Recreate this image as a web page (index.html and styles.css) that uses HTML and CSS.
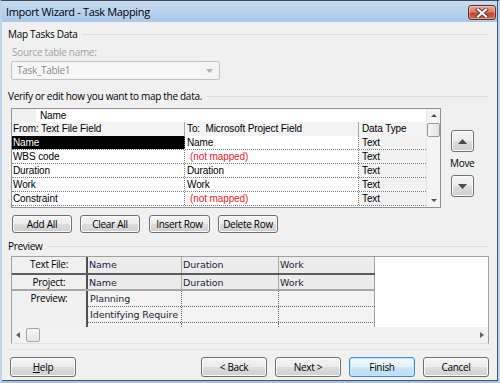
FILE: index.html
```html
<!DOCTYPE html>
<html lang="en">
<head>
  <meta charset="UTF-8" />
  <title>Import Wizard - Task Mapping</title>
  <link rel="stylesheet" href="styles.css">
</head>
<body>
  <div class="window">
    <div class="titlebar">
      <span class="title">Import Wizard - Task Mapping</span>
      <span class="close-btn">
        <svg width="14" height="10" viewBox="0 0 14 10">
          <path d="M3 1.5 L11 8.5 M11 1.5 L3 8.5" stroke="#5a3a36" stroke-width="4" stroke-linecap="square"/>
          <path d="M3 1.5 L11 8.5 M11 1.5 L3 8.5" stroke="#ffffff" stroke-width="2.2" stroke-linecap="square"/>
        </svg>
      </span>
    </div>

    <div class="content">
      <div class="group-title first"><span>Map Tasks Data</span><div class="rule"></div></div>
      <div class="field-label">Source table name:</div>
      <div class="combo">
        <span class="combo-text">Task_Table1</span>
        <span class="combo-arrow">
          <svg width="7" height="4" viewBox="0 0 7 4"><path d="M0 0 H7 L3.5 4 Z" fill="#b0b0b0"/></svg>
        </span>
      </div>

      <div class="group-title verify"><span>Verify or edit how you want to map the data.</span><div class="rule"></div></div>

      <div class="map-row">
        <div class="grid">
          <div class="grid-table">
            <div class="top-row">
              <div class="corner"></div>
              <div class="top-name">Name</div>
            </div>
            <div class="row head-row">
              <div class="cell">From: Text File Field</div>
              <div class="cell">To:&nbsp; Microsoft Project Field</div>
              <div class="cell">Data Type</div>
            </div>
            <div class="row data-row">
              <div class="cell selected">Name</div>
              <div class="cell">Name</div>
              <div class="cell type">Text</div>
            </div>
            <div class="row data-row">
              <div class="cell">WBS code</div>
              <div class="cell unmapped">(not mapped)</div>
              <div class="cell type">Text</div>
            </div>
            <div class="row data-row">
              <div class="cell">Duration</div>
              <div class="cell">Duration</div>
              <div class="cell type">Text</div>
            </div>
            <div class="row data-row">
              <div class="cell">Work</div>
              <div class="cell">Work</div>
              <div class="cell type">Text</div>
            </div>
            <div class="row data-row">
              <div class="cell">Constraint</div>
              <div class="cell unmapped">(not mapped)</div>
              <div class="cell type">Text</div>
            </div>
          </div>
          <div class="vscroll">
            <span class="arrow-up-small"></span>
            <span class="vthumb"></span>
            <span class="spacer"></span>
            <span class="arrow-down-small"></span>
          </div>
        </div>

        <div class="move">
          <button class="move-btn"><svg width="9" height="5" viewBox="0 0 9 5"><path d="M0 5 L4.5 0 L9 5 Z" fill="#4a4a4a"/></svg></button>
          <div class="move-label">Move</div>
          <button class="move-btn"><svg width="9" height="5" viewBox="0 0 9 5"><path d="M0 0 L9 0 L4.5 5 Z" fill="#4a4a4a"/></svg></button>
        </div>
      </div>

      <div class="grid-buttons">
        <button class="btn">Add All</button>
        <button class="btn">Clear All</button>
        <button class="btn wide">Insert Row</button>
        <button class="btn">Delete Row</button>
      </div>

      <div class="group-title preview-title"><span>Preview</span><div class="rule"></div></div>

      <div class="preview">
        <div class="preview-area">
          <div class="preview-grid">
            <div class="prow hdr1">
              <div class="plabel">Text File:</div>
              <div class="pcell c1">Name</div>
              <div class="pcell c2">Duration</div>
              <div class="pcell c3">Work</div>
            </div>
            <div class="prow hdr2">
              <div class="plabel">Project:</div>
              <div class="pcell c1">Name</div>
              <div class="pcell c2">Duration</div>
              <div class="pcell c3">Work</div>
            </div>
            <div class="pbody">
              <div class="plabel preview-label">Preview:</div>
              <div class="pdata">
                <div class="drow">
                  <div class="dcell c1">Planning</div>
                  <div class="dcell c2"></div>
                  <div class="dcell c3"></div>
                </div>
                <div class="drow">
                  <div class="dcell c1">Identifying Require</div>
                  <div class="dcell c2"></div>
                  <div class="dcell c3"></div>
                </div>
                <div class="drow filler">
                  <div class="dcell c1"></div>
                  <div class="dcell c2"></div>
                  <div class="dcell c3"></div>
                </div>
              </div>
            </div>
          </div>
          <div class="preview-blank"></div>
        </div>
        <div class="hscroll">
          <svg class="h-left" width="4" height="6" viewBox="0 0 4 6"><path d="M4 0 L0 3 L4 6 Z" fill="#606060"/></svg>
          <span class="hthumb"></span>
          <span class="spacer"></span>
          <svg class="h-right" width="4" height="6" viewBox="0 0 4 6"><path d="M0 0 L4 3 L0 6 Z" fill="#606060"/></svg>
        </div>
      </div>
    </div>

    <div class="separator"></div>
    <div class="footer">
      <button class="btn foot help"><u>H</u>elp</button>
      <div class="foot-right">
        <button class="btn foot">&lt; Back</button>
        <button class="btn foot">Next &gt;</button>
        <button class="btn foot default">Finish</button>
        <button class="btn foot">Cancel</button>
      </div>
    </div>
  </div>
</body>
</html>
```

FILE: styles.css
```css
* {
  box-sizing: border-box;
}

body {
  margin: 0;
  font-family: "Open Sans", sans-serif;
  font-size: 10px;
  letter-spacing: -0.3px;
  color: #000;
  background: #b9d1ea;
}

.window {
  width: 500px;
  height: 383px;
  background: #f0f0f0;
  border-top: 1px solid #3f4c5a;
  border-left: 2px solid #bcd4ec;
  border-right: 2px solid #bcd4ec;
  border-bottom: 2px solid #a6c3e3;
  box-shadow: inset -1px 0 0 #4a5561, inset 0 -1px 0 #4a5561;
  display: flex;
  flex-direction: column;
}

/* title bar */
.titlebar {
  height: 21px;
  display: flex;
  align-items: center;
  justify-content: space-between;
  padding: 0 1px 0 4px;
  background: linear-gradient(#c9dcf1, #a9c7e8);
  margin-right: 1px;
}

.title {
  font-size: 11px;
  letter-spacing: -0.35px;
  color: #000;
}

.close-btn {
  width: 28px;
  height: 15px;
  margin-top: 2px;
  border: 1px solid #6b2e26;
  border-radius: 3px;
  background: linear-gradient(#e4a899 0%, #d7806c 45%, #c2452c 55%, #cf6b4e 100%);
  display: flex;
  align-items: center;
  justify-content: center;
  box-shadow: inset 0 0 0 1px rgba(255, 255, 255, 0.35);
}

/* body */
.content {
  padding: 0 10px 0 6px;
}

.group-title {
  height: 14px;
  display: flex;
  align-items: center;
  line-height: 14px;
}

.group-title .rule {
  flex: 1;
  height: 0;
  border-top: 1px solid #d5dfe5;
  margin-left: 5px;
}

.group-title.first { margin-top: 5px; }
.group-title.verify { margin-top: 9px; }
.group-title.preview-title { margin-top: 6px; }

.field-label {
  margin-top: 4px;
  padding-left: 4px;
  height: 14px;
  line-height: 14px;
  color: #a3a3a3;
}

.combo {
  margin: 2px 0 0 3px;
  width: 209px;
  height: 19px;
  border: 1px solid #c3c3c3;
  border-radius: 2px;
  background: #f4f4f4;
  display: flex;
  padding: 1px;
}

.combo-text {
  flex: 1;
  background: #f7f7f7;
  color: #8c8c8c;
  padding-left: 4px;
  line-height: 15px;
}

.combo-arrow {
  width: 18px;
  display: flex;
  align-items: center;
  justify-content: center;
}

/* mapping grid */
.map-row {
  display: flex;
  margin: 5px 0 0 3px;
}

.grid {
  width: 430px;
  height: 100px;
  border: 1px solid #8e9399;
  display: flex;
  background: #fff;
  font-family: "Liberation Sans", Arial, sans-serif;
  font-size: 10px;
  letter-spacing: -0.1px;
}

.grid-table {
  width: 414px;
  overflow: hidden;
}

.top-row {
  height: 13px;
  display: flex;
}

.corner {
  width: 24px;
  background: #f0f0f0;
}

.top-name {
  flex: 1;
  padding-left: 4px;
  line-height: 13px;
}

.row {
  display: grid;
  grid-template-columns: 173px 174px 67px;
  height: 14px;
}

.cell {
  line-height: 13px;
  padding-left: 1px;
  white-space: nowrap;
  overflow: hidden;
  border-right: 1px dotted #7a7a7a;
}

.head-row {
  background: #f3f3f3;
}

.head-row .cell {
  border-right: 1px solid #a8a8a8;
  line-height: 14px;
}

.head-row .cell:nth-child(2) {
  padding-left: 2px;
}

.data-row {
  border-bottom: 1px dotted #7a7a7a;
}

.data-row .cell:nth-child(2) {
  padding-left: 2px;
}

.cell.selected {
  background: #000;
  color: #fff;
}

.data-row .cell.unmapped {
  color: #e8211f;
  padding-left: 5px;
}

.cell.type {
  background: #f2f2f2;
  padding-left: 3px;
  border-right: none;
}

.head-row .cell:last-child {
  border-right: none;
  padding-left: 3px;
}

.vscroll {
  width: 14px;
  background: #f4f4f4;
  border-left: 1px solid #e6e6e6;
  display: flex;
  flex-direction: column;
  align-items: center;
}

.arrow-up-small,
.arrow-down-small {
  width: 0;
  height: 0;
  border-left: 3px solid transparent;
  border-right: 3px solid transparent;
}

.arrow-up-small {
  margin-top: 5px;
  border-bottom: 3px solid #505050;
}

.arrow-down-small {
  margin-bottom: 5px;
  border-top: 3px solid #505050;
}

.vthumb {
  margin-top: 6px;
  width: 13px;
  height: 14px;
  border: 1px solid #9a9a9a;
  border-radius: 2px;
  background: linear-gradient(90deg, #f6f6f6, #e2e2e2);
}

.spacer {
  flex: 1;
}

.move {
  margin-left: 10px;
  padding-top: 22px;
  display: flex;
  flex-direction: column;
  align-items: flex-start;
}

.move-btn {
  width: 23px;
  height: 22px;
  padding: 0;
  border: 1px solid #707070;
  border-radius: 3px;
  background: linear-gradient(#f4f4f4 0%, #ebebeb 50%, #dcdcdc 51%, #cfcfcf 100%);
  box-shadow: inset 0 0 0 1px #fbfbfb;
  display: flex;
  align-items: center;
  justify-content: center;
}

.move-label {
  margin: 4px 0 5px -1px;
  height: 14px;
  line-height: 14px;
}

/* buttons */
.btn {
  font-family: "Open Sans", sans-serif;
  font-size: 10px;
  letter-spacing: -0.3px;
  color: #000;
  height: 18px;
  width: 60px;
  padding: 0;
  border: 1px solid #707070;
  border-radius: 3px;
  background: linear-gradient(#f4f4f4 0%, #ebebeb 50%, #dcdcdc 51%, #cfcfcf 100%);
  box-shadow: inset 0 0 0 1px #fbfbfb;
}

.grid-buttons {
  display: flex;
  gap: 8px;
  margin: 7px 0 0 4px;
}

.grid-buttons .wide {
  width: 61px;
  margin-left: 1px;
}

/* preview */
.preview {
  margin: 3px 0 0 3px;
  width: 478px;
  border: 1px solid #a0a0a0;
  border-bottom-color: #e3e3e3;
}

.preview-area {
  height: 70px;
  display: flex;
}

.preview-grid {
  width: 363px;
  display: flex;
  flex-direction: column;
  font-family: "DejaVu Sans", sans-serif;
  font-size: 9.5px;
  letter-spacing: -0.1px;
  color: #1c1c3a;
}

.preview-blank {
  flex: 1;
  background: #fff;
}

.prow {
  display: flex;
}

.prow.hdr1 {
  height: 18px;
  border-bottom: 2px solid #5c5c5c;
}

.prow.hdr2 {
  height: 16px;
  border-bottom: 2px solid #a8a8a8;
}

.plabel {
  width: 76px;
  border-right: 2px solid #505050;
  text-align: center;
  font-family: "Open Sans", sans-serif;
  font-size: 10px;
  letter-spacing: -0.3px;
  color: #000;
  line-height: 15px;
}

.pcell,
.dcell {
  padding-left: 1px;
  white-space: nowrap;
  overflow: hidden;
}

.pcell {
  line-height: 15px;
  background: #ececec;
}

.c1 { width: 94px; }
.c2 { width: 97px; }
.c3 { width: 96px; }

.pcell.c1,
.pcell.c2 {
  border-right: 1px solid #a8a8a8;
}

.pcell.c3,
.dcell.c3 {
  border-right: 1px solid #a0a0a0;
}

.pbody {
  flex: 1;
  display: flex;
}

.preview-label {
  line-height: 14px;
}

.pdata {
  display: flex;
  flex-direction: column;
}

.drow {
  display: flex;
  height: 16px;
  border-bottom: 1px dotted #6a6a6a;
}

.drow.filler {
  height: 4px;
  border-bottom: none;
}

.dcell {
  line-height: 15px;
  padding-left: 2px;
  background: #f3f3f3;
}

.dcell.c1,
.dcell.c2 {
  border-right: 1px dotted #6a6a6a;
}

.hscroll {
  height: 16px;
  background: #f2f2f2;
  display: flex;
  align-items: center;
  padding: 0 4px;
}

.hthumb {
  margin-left: 6px;
  width: 14px;
  height: 14px;
  border: 1px solid #a5a5a5;
  border-radius: 2px;
  background: linear-gradient(#f7f7f7, #e4e4e4);
}

/* footer */
.separator {
  margin: 5px 7px 0 6px;
  border-top: 1px solid #dce2e8;
}

.footer {
  display: flex;
  margin-top: 7px;
  padding: 0 9px 0 8px;
}

.btn.foot {
  height: 20px;
  width: 66px;
}

.help {
  width: 65px;
}

.foot-right {
  margin-left: auto;
  display: flex;
  gap: 8px;
}

.btn.default {
  border-color: #3c8ccf;
  background: linear-gradient(#f3f9fd 0%, #e3f1fb 50%, #cfe6f6 51%, #bddcf2 100%);
  box-shadow: inset 0 0 0 1px #c3e6fb;
}
```
